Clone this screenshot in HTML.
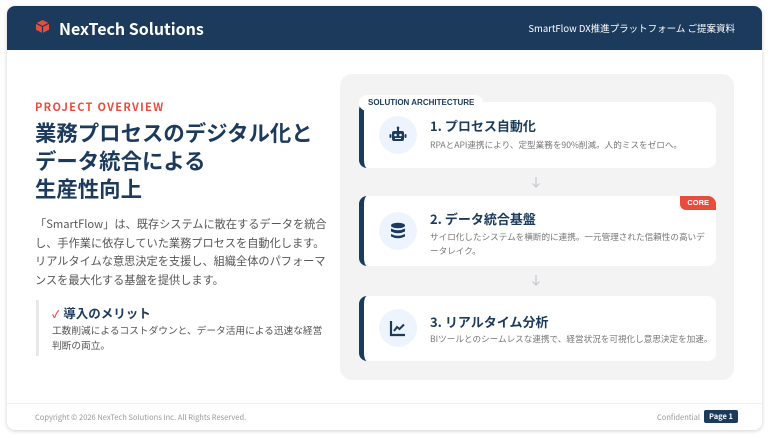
<!DOCTYPE html>
<html><head><meta charset="utf-8"><style>
*{margin:0;padding:0;box-sizing:border-box}
body{width:770px;height:438px;background:#fff;font-family:"Liberation Sans","Noto Sans CJK JP",sans-serif;position:relative;overflow:hidden}
.card{position:absolute;left:7px;top:6px;width:755px;height:424px;border-radius:8px;background:#fff;box-shadow:0 1px 4px rgba(0,0,0,.18);overflow:hidden}
.hd{position:absolute;left:0;top:0;width:100%;height:44px;background:#1b3a5c;color:#fff}
.logo{position:absolute;left:28px;top:13px}
.brand{position:absolute;left:52px;top:12px;font-size:16px;font-weight:bold;font-family:"Noto Sans CJK JP",sans-serif;line-height:20px}
.hr{position:absolute;right:27px;top:15px;font-size:9.5px;font-family:"Noto Sans CJK JP",sans-serif}
.jp{font-family:"Noto Sans CJK JP",sans-serif}
.po{position:absolute;left:28px;top:93px;font-size:11px;color:#e74c3c;letter-spacing:1.3px;font-weight:bold}
.h1{position:absolute;left:28px;top:113px;font-size:21.4px;line-height:28px;font-weight:bold;color:#1b3a5c}
.p{position:absolute;left:28px;top:209px;white-space:nowrap;font-size:11.2px;line-height:18.5px;color:#555}
.mer{position:absolute;left:29px;top:294px;height:56px;border-left:3px solid #e6e8ec;padding-left:13px}
.mer b{display:block;font-size:12.5px;color:#1b3a5c;line-height:18px;margin-top:4px}
.mer b span{color:#e74c3c;font-size:10px;margin-right:4px}
.mer div{font-size:9.7px;color:#555;line-height:15px;white-space:nowrap}
.panel{position:absolute;left:333px;top:68px;width:394px;height:306px;background:#f3f3f4;border-radius:12px}
.tag{position:absolute;left:352px;top:89px;background:#fff;border-radius:8px;padding:0 9px;height:16px;font-size:8px;font-weight:bold;color:#1b3a5c;line-height:16px}
.c{position:absolute;left:352px;width:357px;background:#fff;border-radius:8px;border-left:5px solid #1b3a5c}
.ic{position:absolute;left:15px;width:38px;height:38px;border-radius:50%;background:#edf4fd}
.ic svg{position:absolute;left:10px;top:10px}
.t{position:absolute;left:66px;font-size:13px;font-weight:bold;color:#1b3a5c}
.d{position:absolute;left:66px;font-size:8.6px;color:#777;line-height:13.5px;width:282px}
.core{position:absolute;right:0;top:0;background:#e74c3c;color:#fff;font-size:7.5px;font-weight:bold;padding:0 7px;height:14px;line-height:14px;border-radius:0 8px 0 6px}
.arr{position:absolute;left:524px}
.ft{position:absolute;left:0;top:397px;width:100%;height:27px;border-top:1px solid #f0f0f0}
.cp{position:absolute;left:28px;top:406px;font-size:7.5px;color:#999}
.cf{position:absolute;left:650px;top:406px;font-size:7.5px;color:#999}
.pg{position:absolute;left:697px;top:404px;background:#1b3a5c;color:#fff;font-size:7.5px;font-weight:bold;padding:0 5px;height:13px;line-height:13px;border-radius:2px}
</style></head><body>
<div class="card">
<div class="hd">
<svg class="logo" width="15" height="15" viewBox="0 0 16 16"><path d="M8 1 L15 4.5 V11.5 L8 15 L1 11.5 V4.5Z" fill="#e74c3c"/><path d="M1 4.5 L8 8 L15 4.5 M8 8 V15" stroke="#1b3a5c" stroke-width="1.3" fill="none"/></svg>
<div class="brand">NexTech Solutions</div>
<div class="hr">SmartFlow DX推進プラットフォーム ご提案資料</div>
</div>
<div class="po jp">PROJECT OVERVIEW</div>
<div class="h1 jp">業務プロセスのデジタル化と<br>データ統合による<br>生産性向上</div>
<div class="p jp">「SmartFlow」は、既存システムに散在するデータを統合<br>し、手作業に依存していた業務プロセスを自動化します。<br>リアルタイムな意思決定を支援し、組織全体のパフォーマ<br>ンスを最大化する基盤を提供します。</div>
<div class="mer jp"><b><span>✓</span>導入のメリット</b><div>工数削減によるコストダウンと、データ活用による迅速な経営<br>判断の両立。</div></div>
<div class="panel"></div>
<div class="c" style="top:96px;height:66px">
<div class="ic" style="top:14px"><svg width="18" height="18" viewBox="0 0 18 18"><rect x="3" y="5" width="12" height="10" rx="2" fill="#1b3a5c"/><rect x="8" y="1.5" width="2" height="3.5" fill="#1b3a5c"/><circle cx="9" cy="1.8" r="1.3" fill="#1b3a5c"/><rect x="0.5" y="8" width="2" height="4" rx="1" fill="#1b3a5c"/><rect x="15.5" y="8" width="2" height="4" rx="1" fill="#1b3a5c"/><circle cx="6.5" cy="9" r="1.3" fill="#edf4fd"/><circle cx="11.5" cy="9" r="1.3" fill="#edf4fd"/><rect x="6" y="12" width="6" height="1" fill="#edf4fd"/></svg></div>
<div class="t jp" style="top:14px">1. プロセス自動化</div>
<div class="d jp" style="top:37px">RPAとAPI連携により、定型業務を90%削減。人的ミスをゼロへ。</div>
</div>
<svg class="arr" style="top:170px" width="10" height="12" viewBox="0 0 10 12"><path d="M5 1 V11 M1.5 7.5 L5 11 L8.5 7.5" stroke="#c4c9d0" stroke-width="1.2" fill="none"/></svg>
<div class="c" style="top:190px;height:70px">
<div class="core">CORE</div>
<div class="ic" style="top:16px"><svg width="18" height="18" viewBox="0 0 18 18"><ellipse cx="9" cy="3.5" rx="7" ry="2.8" fill="#1b3a5c"/><path d="M2 6.5 Q9 10 16 6.5 V9.5 Q9 13 2 9.5Z" fill="#1b3a5c"/><path d="M2 12 Q9 15.5 16 12 V14.5 Q9 18 2 14.5Z" fill="#1b3a5c"/></svg></div>
<div class="t jp" style="top:13px">2. データ統合基盤</div>
<div class="d jp" style="top:35px">サイロ化したシステムを横断的に連携。一元管理された信頼性の高いデ<br>ータレイク。</div>
</div>
<svg class="arr" style="top:268px" width="10" height="12" viewBox="0 0 10 12"><path d="M5 1 V11 M1.5 7.5 L5 11 L8.5 7.5" stroke="#c4c9d0" stroke-width="1.2" fill="none"/></svg>
<div class="c" style="top:290px;height:65px">
<div class="ic" style="top:13px"><svg width="18" height="18" viewBox="0 0 18 18"><path d="M2 2 V16 H16" stroke="#1b3a5c" stroke-width="2.2" fill="none"/><path d="M5 12 L8 8 L10.5 10 L15 5.5" stroke="#1b3a5c" stroke-width="2" fill="none"/></svg></div>
<div class="t jp" style="top:16px">3. リアルタイム分析</div>
<div class="d jp" style="top:37px;width:300px;white-space:nowrap">BIツールとのシームレスな連携で、経営状況を可視化し意思決定を加速。</div>
</div>
<div class="tag">SOLUTION ARCHITECTURE</div>
<div class="ft"></div>
<div class="cp jp">Copyright © 2026 NexTech Solutions Inc. All Rights Reserved.</div>
<div class="cf jp">Confidential</div>
<div class="pg jp">Page 1</div>
</div>
</body></html>
